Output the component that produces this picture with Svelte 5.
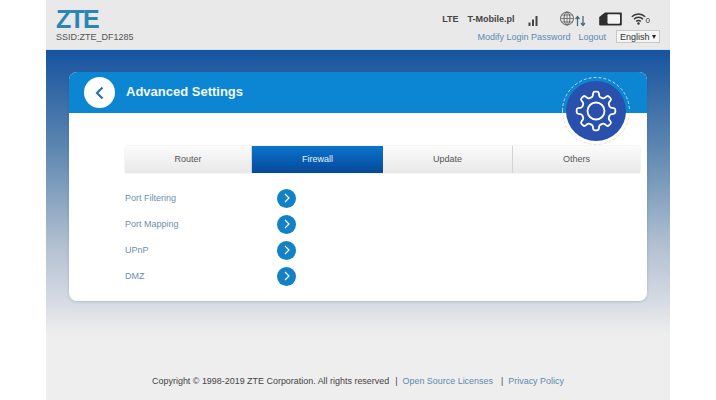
<script>
  const tabs = ['Router', 'Firewall', 'Update', 'Others'];
  const links = ['Port Filtering', 'Port Mapping', 'UPnP', 'DMZ'];

  // gear outline with rounded corners
  function gearPath(cx, cy, outer, inner, teeth) {
    const step = (Math.PI * 2) / teeth;
    const pts = [];
    for (let i = 0; i < teeth; i++) {
      const a = i * step - Math.PI / 2;
      for (const [r, t] of [[inner, -0.3], [outer, -0.17], [outer, 0.17], [inner, 0.3]]) {
        pts.push([cx + r * Math.cos(a + t * step), cy + r * Math.sin(a + t * step)]);
      }
    }
    const mix = (p, q, f) => `${(p[0] + (q[0] - p[0]) * f).toFixed(2)} ${(p[1] + (q[1] - p[1]) * f).toFixed(2)}`;
    let d = '';
    pts.forEach((p, i) => {
      const prev = pts[(i + pts.length - 1) % pts.length];
      const next = pts[(i + 1) % pts.length];
      d += `${i ? 'L' : 'M'}${mix(p, prev, 0.3)} Q${p[0].toFixed(2)} ${p[1].toFixed(2)} ${mix(p, next, 0.3)} `;
    });
    return d + 'Z';
  }
  const gear = gearPath(30, 30, 19.5, 14.5, 8);
</script>

<div class="page">
  <header class="top">
    <div class="brand">
      <span class="logo">ZTE</span>
      <span class="ssid">SSID:ZTE_DF1285</span>
    </div>
    <div class="status">
      <div class="indicators">
        <strong class="net">LTE</strong>
        <strong class="carrier">T-Mobile.pl</strong>
        <svg class="signal" width="12" height="12" viewBox="0 0 12 12">
          <rect x="0.5" y="8.500" width="2" height="3.500" fill="#444" />
          <rect x="4" y="5.500" width="2" height="6.500" fill="#444" />
          <rect x="7.500" y="2" width="2" height="10" fill="#444" />
        </svg>
        <svg class="globe" width="30" height="16" viewBox="0 0 30 16" fill="none" stroke="#666">
          <circle cx="8" cy="7.500" r="6.500" />
          <ellipse cx="8" cy="7.500" rx="3" ry="6.500" />
          <path d="M8 1v13M1.500 7.500h13M2.500 4h11M2.500 11h11" stroke-width=".8" />
          <path d="M18.500 15V6M16.500 8l2-2.500 2 2.500M24 5v9.500M22 12l2 2.500 2-2.500" stroke="#4a6a80" stroke-width="1.300" />
        </svg>
        <svg class="sim" width="23" height="14" viewBox="0 0 23 14">
          <path d="M6 .5H22a.8.8 0 0 1 .8.8v11.400a.8.8 0 0 1-.8.8H1a.8.8 0 0 1-.8-.8V5Z" fill="#2e2e2e" />
          <rect x="8.500" y="2.200" width="12.500" height="9.600" rx="1" fill="#f4f4f4" />
        </svg>
        <span class="wifi">
          <svg width="15" height="13" viewBox="0 0 15 13" fill="none" stroke="#3a3a3a" stroke-width="1.500">
            <path d="M.8 4.800a9.500 9.500 0 0 1 13.400 0M3 7.200a6.300 6.300 0 0 1 9 0M5.200 9.500a3.200 3.200 0 0 1 4.600 0" />
            <circle cx="7.500" cy="11.500" r="1.200" fill="#3a3a3a" stroke="none" />
          </svg>
          <small>0</small>
        </span>
      </div>
      <div class="actions">
        <a href="#pw">Modify Login Password</a>
        <a href="#out">Logout</a>
        <span class="lang">English<i></i></span>
      </div>
    </div>
  </header>

  <main class="hero">
    <section class="card">
      <div class="card-head">
        <span class="back">
          <svg width="12" height="14" viewBox="0 0 12 14" fill="none" stroke="#2c6ea8" stroke-width="2.200">
            <path d="M8.500 1.500 3 7l5.500 5.500" />
          </svg>
        </span>
        <h1>Advanced Settings</h1>
        <span class="badge">
          <svg width="70" height="70" viewBox="-5 -5 70 70" fill="none">
            <path d="M-3.500 30a33.500 33.500 0 0 1 67 0" stroke="#bcdcf2" stroke-dasharray="3 2" />
            <path d="M-3.500 30a33.500 33.500 0 0 0 67 0" stroke="#eadfcc" stroke-dasharray="3 2" />
            <circle cx="30" cy="30" r="30" fill="#2a50ae" />
            <path d={gear} stroke="#fff" stroke-width="1.800" stroke-linejoin="round" />
            <circle cx="30" cy="30" r="8.500" stroke="#fff" stroke-width="1.800" />
          </svg>
        </span>
      </div>
      <div class="card-body">
        <nav class="tabs">
          {#each tabs as tab}
            <span class="tab" class:active={tab === 'Firewall'}>{tab}</span>
          {/each}
        </nav>
        <ul class="rows">
          {#each links as link}
            <li>
              <a href="#x">{link}</a>
              <span class="go">
                <svg width="8" height="10" viewBox="0 0 8 10" fill="none" stroke="#fff" stroke-width="1.200">
                  <path d="M2 1l4 4-4 4" />
                </svg>
              </span>
            </li>
          {/each}
        </ul>
      </div>
    </section>
  </main>

  <footer class="foot">
    <span>Copyright © 1998-2019 ZTE Corporation. All rights reserved</span>
    <span class="bar">|</span>
    <a href="#oss">Open Source Licenses</a>
    <span class="bar wide">|</span>
    <a href="#privacy">Privacy Policy</a>
  </footer>
</div>

<style>
  :global(body) { margin: 0; background: #fff; }
  .page {
    width: 624px;
    height: 400px;
    margin-left: 46px;
    overflow: hidden;
    font-family: "Liberation Sans", Arial, sans-serif;
    background: #eeeeee;
    color: #444;
  }
  a { color: #5a8ab5; text-decoration: none; }

  .top {
    height: 50px;
    box-sizing: border-box;
    padding: 0 10px;
    display: flex;
    justify-content: space-between;
    border-bottom: 1px solid #cfe2ef;
    background: #e9e9e9;
  }
  .brand { display: flex; flex-direction: column; }
  .logo {
    margin-top: 6px;
    font-size: 25px;
    line-height: 26px;
    font-weight: 700;
    letter-spacing: -1.800px;
    color: #2a85b5;
  }
  .ssid { margin-top: -1px; font-size: 9px; line-height: 12px; color: #555; }

  .status { display: flex; flex-direction: column; align-items: flex-end; }
  .indicators {
    height: 30px;
    box-sizing: border-box;
    padding: 7px 10px 0 0;
    display: flex;
    align-items: center;
    color: #444;
    font-size: 9px;
  }
  .net { margin-right: 9px; }
  .carrier { margin-right: 13px; }
  .signal { margin-right: 19px; margin-top: 3px; }
  .globe { margin-right: 10px; }
  .sim { margin-right: 9px; }
  .wifi { display: flex; align-items: flex-end; }
  .wifi small { font-size: 8px; line-height: 8px; margin-left: 0; color: #333; }
  .actions { display: flex; align-items: center; gap: 8px; font-size: 9px; }
  .lang {
    width: 44px;
    height: 13px;
    margin-left: 2px;
    box-sizing: border-box;
    padding-left: 3px;
    display: flex;
    align-items: center;
    justify-content: space-between;
    border: 1px solid #c8c8c8;
    background: #f5f5f5;
    color: #333;
  }
  .lang i {
    margin-right: 3px;
    border: 2.500px solid transparent;
    border-top: 4px solid #222;
    border-bottom: 0;
  }

  .hero {
    height: 285px;
    box-sizing: border-box;
    padding: 22px 23px 0;
    background: linear-gradient(#16539f 0, #5c86b0 34%, #b0bfd0 68%, #d5dbe3 88%, #eeeeee 100%);
  }
  .card {
    height: 229px;
    border-radius: 8px;
    background: #fff;
    box-shadow: 0 1px 3px rgba(40, 70, 110, .2);
  }
  .card-head {
    position: relative;
    height: 41px;
    padding-left: 15px;
    display: flex;
    align-items: center;
    gap: 11px;
    border-radius: 8px 8px 0 0;
    background: #0c85d3;
  }
  .back {
    width: 31px;
    height: 31px;
    display: grid;
    place-items: center;
    border-radius: 50%;
    background: #fff;
  }
  h1 { margin: -3px 0 0; font-size: 13px; font-weight: 700; color: #f2f8fc; }
  .badge { position: absolute; left: 492px; top: 4px; width: 70px; height: 70px; }

  .card-body { padding: 33px 7px 0 56px; }
  .tabs {
    height: 27px;
    display: grid;
    grid-template-columns: 127px 131px 130px 127px;
    border-radius: 2px;
    box-shadow: 0 0 1px rgba(0, 0, 0, .4);
    font-size: 9px;
  }
  .tab {
    padding-bottom: 2px;
    box-sizing: border-box;
    display: grid;
    place-items: center;
    color: #555;
    background: linear-gradient(#fbfbfb, #e8e8e8);
    border-right: 1px solid #d2d2d2;
  }
  .tab:last-child { border-right: 0; }
  .tab.active { color: #e8f3fb; border-right: 0; background: linear-gradient(#0a74cc, #06489a); }

  .rows { margin: 12px 0 0; padding: 0; list-style: none; }
  .rows li { height: 26px; display: flex; align-items: center; font-size: 9px; }
  .rows a { width: 152px; color: #6d8fb0; }
  .go {
    width: 19px;
    height: 19px;
    display: grid;
    place-items: center;
    border-radius: 50%;
    background: #1281c6;
  }

  .foot {
    margin-top: 39px;
    display: flex;
    justify-content: center;
    font-size: 8.950px;
    line-height: 14px;
    color: #444;
  }
  .bar { margin: 0 5px 0 6px; }
  .bar.wide { margin: 0 5px 0 8px; }
</style>
